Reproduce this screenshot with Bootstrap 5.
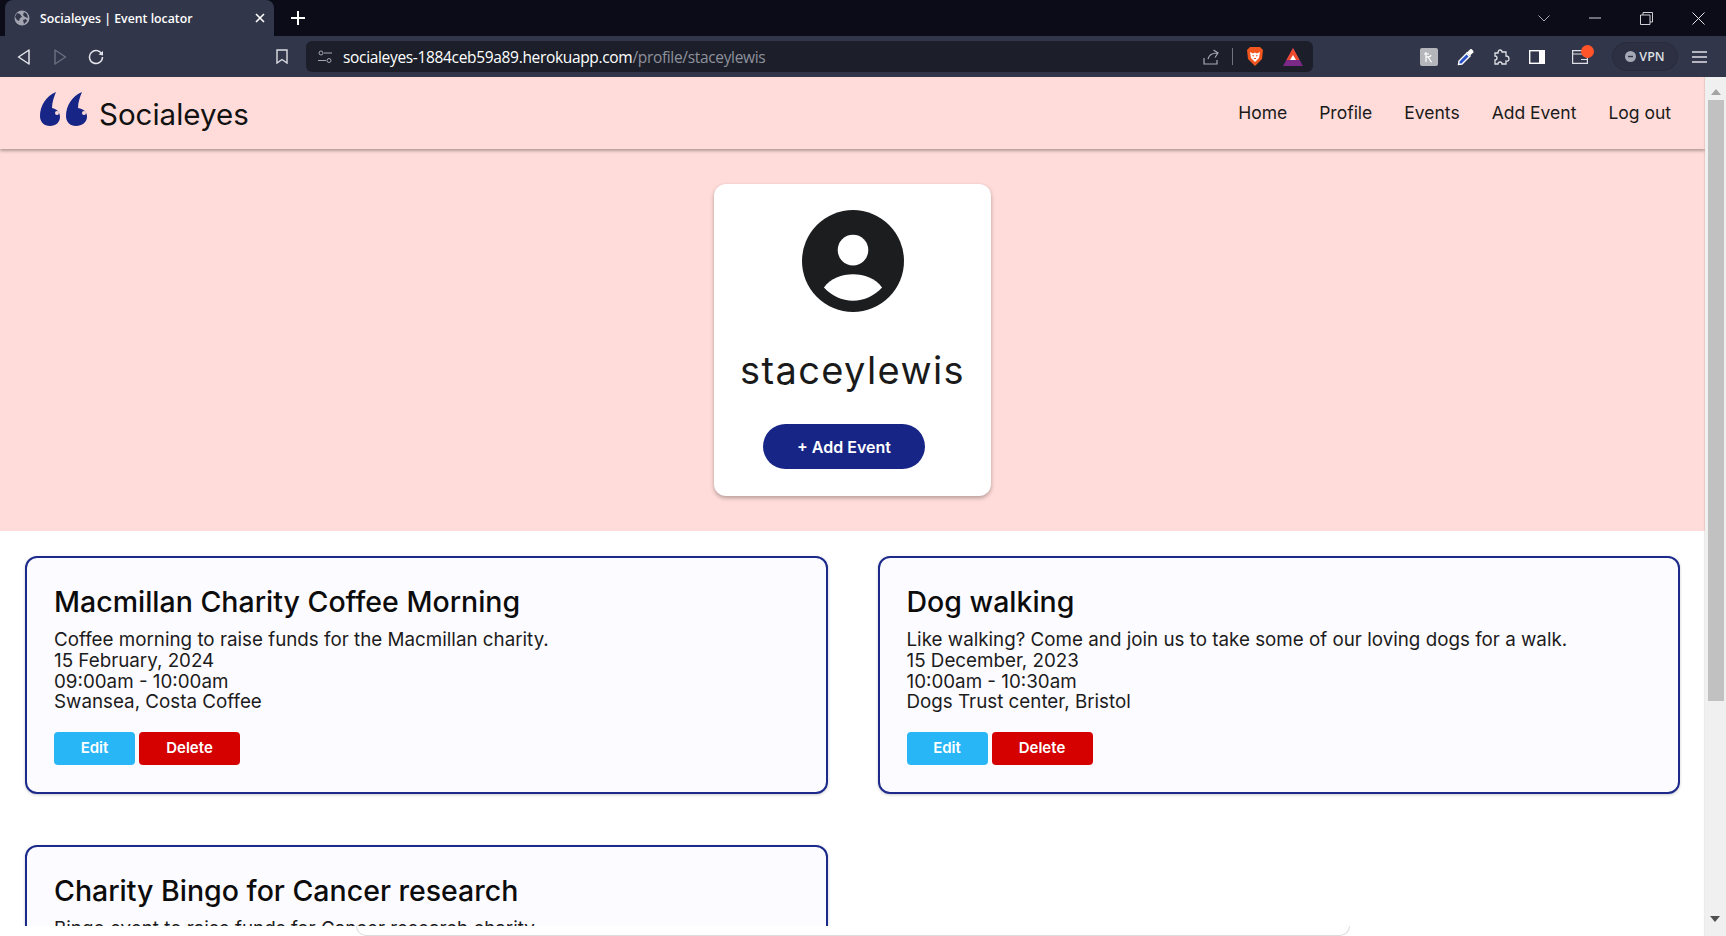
<!doctype html>
<html lang="en">
<head>
    <meta charset="utf-8">
    <meta name="viewport" content="width=device-width, initial-scale=1">
    <title>Socialeyes | Event locator</title>
    <link href="https://cdn.jsdelivr.net/npm/bootstrap@5.3.3/dist/css/bootstrap.min.css" rel="stylesheet">
    <style>
        html, body { height: 100%; margin: 0; overflow: hidden; }
        body { font-family: Inter, "Liberation Sans", sans-serif; color: #111; background: #fff; }

        /* browser frame */
        .tab-strip { height: 36px; background: #0b0c18; padding-left: 5px; color: #fff; }
        .tab-active { width: 269px; height: 36px; background: #32364a; border-radius: 8px 8px 0 0; padding: 0 9px; font: 600 12.3px "Open Sans", sans-serif; }
        .tab-title { margin-left: 10px; }
        .tab-close { margin-left: auto; }
        .tab-add { margin-left: 17px; }
        .win-btns { margin-left: auto; gap: 39px; padding-right: 21px; }
        .tool-strip { height: 41px; background: #32364a; padding-left: 17px; }
        .fwd-icon { margin-left: 24px; }
        .reload-icon { margin-left: 21px; }
        .mark-icon { margin-left: 172px; }
        .url-box { width: 1007px; height: 31px; background: #1c1f2a; border-radius: 6px; margin-left: 18px; padding: 0 10px 0 12px; font: 15.5px "Open Sans", sans-serif; color: #fff; }
        .url-box .url-path { color: #8e919c; }
        .url-text { margin-left: 11px; letter-spacing: -.33px; }
        .url-icons { margin-left: auto; gap: 13px; }
        .url-sep { width: 1px; height: 17px; background: #70737f; }
        .bat-icon { margin-left: 6px; }
        .ext-icons { margin-left: 107px; gap: 19px; }
        .vpn-pill { width: 66px; height: 29px; margin-left: 5px; border: 1px solid #282b3b; border-radius: 15px; background: #2c3042; color: #dfe0e6; font: 600 12.5px "Open Sans", sans-serif; gap: 3px; }
        .menu-icon { margin-left: -5px; }
        .wallet-wrap { position: relative; margin-left: 8px; }
        .wallet-dot { position: absolute; top: -5px; right: -6px; width: 13px; height: 13px; border-radius: 50%; background: #ff5429; }

        /* page */
        .view-wrap { height: 859px; }
        .page-col { width: 1705px; }
        .page-clip { height: 849px; overflow: hidden; }
        .foot-strip { height: 10px; background: #fff; overflow: hidden; }
        .foot-panel { height: 10px; margin: 0 355px 0 356px; border: 1px solid #dcdcdc; border-top: 0; border-radius: 0 0 12px 12px; }
        .scroll-col { width: 21px; background: #f0f0f0; position: relative; box-shadow: -1px 0 1px rgba(0,0,0,.08); }
        .scroll-up { width: 0; height: 0; margin: 12px auto 5px; border: 5px solid transparent; border-top: 0; border-bottom: 6px solid #a3a3a3; }
        .scroll-thumb { width: 16px; height: 601px; margin: 0 auto; background: #c1c1c1; }
        .scroll-down { position: absolute; left: 5px; bottom: 14px; width: 0; height: 0; border: 5px solid transparent; border-bottom: 0; border-top: 6px solid #505050; }

        .site-nav { height: 72px; background: #ffdcd9; padding: 0 34px 0 40px; box-shadow: 0 2px 3px rgba(0,0,0,.3); position: relative; }
        .site-brand { font-size: 29.5px; color: #111; padding: 0; margin: 0; gap: 11px; line-height: 1; }
        .site-brand span { margin-top: 4px; }
        .brand-mark { margin-top: -7px; }
        .site-links { gap: 32px; margin-top: 0; }
        .site-links.navbar-nav .nav-link { font-size: 17.5px; color: #1a1a1a; padding: 0; }

        .hero-band { height: 382px; background: #ffdcd9; padding-top: 35px; }
        .profile-box { width: 277px; height: 312px; border: 0; border-radius: 12px; box-shadow: 0 2px 4px rgba(0,0,0,.3); padding-top: 26px; }
        .profile-name { font-size: 38px; font-weight: 400; color: #1a1a1a; margin: 35px 0 31px; line-height: 46px; letter-spacing: 1.4px; }
        .add-btn { width: 162px; height: 45px; margin-left: 49px; border-radius: 23px; background: #172587; color: #fff; border: 0; font-size: 16px; font-weight: 600; }
        .add-btn:hover { background: #172587; color: #fff; }

        .event-row { padding-top: 25px; --bs-gutter-x: 0; }
        .event-col { padding: 0 25px; margin-bottom: 51px; }
        .event-box { height: 238px; background: #fcfbff; border: 2px solid #1b2a8b; border-radius: 12px; box-shadow: 0 1px 3px rgba(0,0,0,.2); padding: 26px 27px; }
        .event-title { font-size: 28.5px; font-weight: 500; line-height: 36px; margin: 0 0 10px; color: #0c0c0c; }
        .event-text { font-size: 18.8px; line-height: 20.8px; color: #1c1c1c; margin: 0 0 19px; }
        .event-btn { height: 33px; padding: 0; font-size: 15px; font-weight: 600; color: #fff; border: 0; border-radius: 4px; }
        .btn-edit { width: 81px; background: #29b6f6; }
        .btn-remove { width: 101px; background: #d50000; }
        .event-btns { gap: 4px; }
    </style>
</head>
<body>

    <div class="tab-strip d-flex align-items-start">
        <div class="tab-active d-flex align-items-center">
            <svg width="16" height="16" viewBox="0 0 16 16"><circle cx="8" cy="8" r="7.5" fill="#a2a5b0"/><path d="M3 3l3 1 2 3-2 1-1 3-2-1-2-3zM10 2l3 2 1 4-3-1-2-2zM9 10l3-1 1 2-3 3z" fill="#32364a"/></svg>
            <span class="tab-title">Socialeyes | Event locator</span>
            <svg class="tab-close" width="10" height="10" viewBox="0 0 10 10"><path d="M1 1l8 8M9 1l-8 8" stroke="#fff" stroke-width="1.6"/></svg>
        </div>
        <svg class="tab-add align-self-center" width="14" height="14" viewBox="0 0 14 14"><path d="M7 0v14M0 7h14" stroke="#fff" stroke-width="2"/></svg>
        <div class="win-btns d-flex align-items-center align-self-center">
            <svg width="12" height="7" viewBox="0 0 12 7"><path d="M.5.5L6 6l5.500-5.500" fill="none" stroke="#a5a7b1"/></svg>
            <svg width="12" height="12" viewBox="0 0 12 12"><path d="M0 6h12" stroke="#d0d1d6"/></svg>
            <svg width="13" height="13" viewBox="0 0 13 13"><path d="M.5 3h9.500v9.500H.5zM3 3V.5h9.500V10H10" fill="none" stroke="#d0d1d6"/></svg>
            <svg width="13" height="13" viewBox="0 0 13 13"><path d="M.5.5l12 12M12.500.5l-12 12" stroke="#e6e6ea"/></svg>
        </div>
    </div>

    <div class="tool-strip d-flex align-items-center">
        <svg width="13" height="16" viewBox="0 0 13 16"><path d="M12 1L1.500 8 12 15z" fill="none" stroke="#e4e5ea" stroke-width="1.500" stroke-linejoin="round"/></svg>
        <svg class="fwd-icon" width="13" height="16" viewBox="0 0 13 16"><path d="M1 1l10.500 7L1 15z" fill="none" stroke="#6a6d7c" stroke-width="1.500" stroke-linejoin="round"/></svg>
        <svg class="reload-icon" width="16" height="16" viewBox="0 0 16 16"><path d="M14 5.500A6.500 6.500 0 1 0 14.500 8" fill="none" stroke="#e4e5ea" stroke-width="1.500"/><path d="M10.500 5.500L15 6.500V2z" fill="#e4e5ea"/></svg>
        <svg class="mark-icon" width="12" height="15" viewBox="0 0 12 15"><path d="M1 1h10v13L6 10.500 1 14z" fill="none" stroke="#dcdde3" stroke-width="1.400"/></svg>
        <div class="url-box d-flex align-items-center">
            <svg width="14" height="14" viewBox="0 0 14 14" fill="none" stroke="#a5a7b1"><circle cx="3" cy="3" r="2"/><path d="M6 3h8M0 10.500h8"/><circle cx="11" cy="10.500" r="2"/></svg>
            <span class="url-text">socialeyes-1884ceb59a89.herokuapp.com<span class="url-path">/profile/staceylewis</span></span>
            <div class="url-icons d-flex align-items-center">
                <svg width="16" height="16" viewBox="0 0 16 16" fill="none" stroke="#a5a7b1" stroke-width="1.200"><path d="M1 9v6h13v-4M5 10c1-4 4-6 9-6M10.500 1L15 4l-3 4.500"/></svg>
                <span class="url-sep"></span>
                <svg width="18" height="21" viewBox="0 0 18 21"><path d="M4 1h10l3 3-1 9-7 7-7-7-1-9z" fill="#f1561f"/><path d="M4 6l3 1.500 2-1 2 1 3-1.500-1 6-4 4-4-4z" fill="#fff"/><path d="M6.500 9.500l1.500.5M11.500 9.500L10 10M8 12.500h2" stroke="#f1561f" stroke-width="1.200"/></svg>
                <svg class="bat-icon" width="20" height="18" viewBox="0 0 20 18"><path d="M10 0l10 18H0z" fill="#7a2a86"/><path d="M10 0l6.500 12h-13z" fill="#ef4a2c"/><path d="M10 7l3 5H7z" fill="#fff"/></svg>
            </div>
        </div>
        <div class="ext-icons d-flex align-items-center">
            <svg width="18" height="18" viewBox="0 0 18 18"><rect width="18" height="18" rx="2" fill="#b5b6bb"/><path d="M6 4v10M4 6h5M6 9c3 0 5-.5 5-2M8 9l2 3c.5 1 1 2 2 2" stroke="#fff" fill="none" stroke-width="1.200"/></svg>
            <svg width="18" height="18" viewBox="0 0 18 18"><path d="M1.500 16.500l.5-3.500 7.500-7.500 3 3-7.500 7.500z" fill="#2a51c8" stroke="#fff" stroke-width="1.400"/><path d="M9 4l1.500 0 3-3c1-.5 3.500 2 3 3.500l-3 2.500.5 2z" fill="#fff"/></svg>
            <svg width="16" height="16" viewBox="0 0 16 16"><path d="M6 1c2 0 2 2 2 2h4v4s3 0 3 3-3 2-3 2v3H8s0-2-2-2-2 2-2 2H1v-4s2 0 2-2-2-2-2-2V4h3s0-3 2-3z" fill="none" stroke="#dfe0e6" stroke-width="1.300"/></svg>
            <svg width="16" height="14" viewBox="0 0 16 14"><rect x=".7" y=".7" width="14.600" height="12.600" fill="none" stroke="#fff" stroke-width="1.400"/><rect x="10" y="1" width="5" height="12" fill="#fff"/></svg>
            <div class="wallet-wrap d-flex">
                <svg width="16" height="14" viewBox="0 0 16 14" fill="none" stroke="#dfe0e6" stroke-width="1.200"><path d="M.6.6h14.800v12.800H.6zM.6 4h14.800M9 9.500h6"/></svg>
                <span class="wallet-dot"></span>
            </div>
            <div class="vpn-pill d-flex align-items-center justify-content-center">
                <svg width="11" height="11" viewBox="0 0 11 11"><circle cx="5.500" cy="5.500" r="5.500" fill="#a5a8b5"/><path d="M3 5.500h5" stroke="#2c3042" stroke-width="1.400"/></svg>
                VPN
            </div>
            <svg class="menu-icon" width="15" height="12" viewBox="0 0 15 12"><path d="M0 1h15M0 6h15M0 11h15" stroke="#dfe0e6" stroke-width="1.300"/></svg>
        </div>
    </div>

    <div class="view-wrap d-flex">
        <div class="page-col">
            <div class="page-clip">
                <nav class="navbar navbar-expand site-nav">
                    <a class="navbar-brand site-brand d-flex align-items-center" href="#">
                        <svg class="brand-mark" width="48" height="35" viewBox="0 0 48 35">
                            <path d="M16 0C6 4 0 14 0 24C0 30 4 34 10 34C16 34 20 30 20 25C20 20 17 17 12 16C12 10 14 5 16 0Z" fill="#172587"/>
                            <circle cx="17" cy="21" r="2" fill="#ffdcd9"/>
                            <path d="M42 0C32 4 26 14 26 24C26 30 30 34 36 34C42 34 47 30 47 25C47 20 44 17 38 16C38 10 40 5 42 0Z" fill="#172587"/>
                            <circle cx="44" cy="21" r="2" fill="#ffdcd9"/>
                        </svg>
                        <span>Socialeyes</span>
                    </a>
                    <div class="navbar-nav site-links ms-auto">
                        <a class="nav-link" href="#">Home</a>
                        <a class="nav-link" href="#">Profile</a>
                        <a class="nav-link" href="#">Events</a>
                        <a class="nav-link" href="#">Add Event</a>
                        <a class="nav-link" href="#">Log out</a>
                    </div>
                </nav>

                <div class="hero-band">
                    <div class="card profile-box mx-auto text-center">
                        <svg class="mx-auto" width="102" height="102" viewBox="0 0 100 100">
                            <circle cx="50" cy="50" r="50" fill="#1c1d1f"/>
                            <circle cx="50" cy="39.300" r="15" fill="#fff"/>
                            <path d="M21.500 76C28 67 39 63 50 63C61 63 72 67 78.500 76C71 84 61 89 50 89C39 89 29 84 21.500 76Z" fill="#fff"/>
                        </svg>
                        <h2 class="profile-name">staceylewis</h2>
                        <div class="text-start">
                            <a class="btn add-btn d-inline-flex align-items-center justify-content-center" href="#">+ Add Event</a>
                        </div>
                    </div>
                </div>

                <div class="row event-row">
                    <div class="col-6 event-col">
                        <div class="card event-box">
                            <h3 class="event-title">Macmillan Charity Coffee Morning</h3>
                            <p class="event-text">Coffee morning to raise funds for the Macmillan charity.<br>15 February, 2024<br>09:00am - 10:00am<br>Swansea, Costa Coffee</p>
                            <div class="event-btns d-flex">
                                <a class="btn event-btn btn-edit d-flex align-items-center justify-content-center" href="#">Edit</a>
                                <a class="btn event-btn btn-remove d-flex align-items-center justify-content-center" href="#">Delete</a>
                            </div>
                        </div>
                    </div>
                    <div class="col-6 event-col">
                        <div class="card event-box">
                            <h3 class="event-title">Dog walking</h3>
                            <p class="event-text">Like walking? Come and join us to take some of our loving dogs for a walk.<br>15 December, 2023<br>10:00am - 10:30am<br>Dogs Trust center, Bristol</p>
                            <div class="event-btns d-flex">
                                <a class="btn event-btn btn-edit d-flex align-items-center justify-content-center" href="#">Edit</a>
                                <a class="btn event-btn btn-remove d-flex align-items-center justify-content-center" href="#">Delete</a>
                            </div>
                        </div>
                    </div>
                    <div class="col-6 event-col">
                        <div class="card event-box">
                            <h3 class="event-title">Charity Bingo for Cancer research</h3>
                            <p class="event-text">Bingo event to raise funds for Cancer research charity.</p>
                        </div>
                    </div>
                </div>
            </div>
            <div class="foot-strip"><div class="foot-panel"></div></div>
        </div>
        <div class="scroll-col">
            <div class="scroll-up"></div>
            <div class="scroll-thumb"></div>
            <div class="scroll-down"></div>
        </div>
    </div>

    <script src="https://cdn.jsdelivr.net/npm/bootstrap@5.3.3/dist/js/bootstrap.bundle.min.js"></script>
</body>
</html>
